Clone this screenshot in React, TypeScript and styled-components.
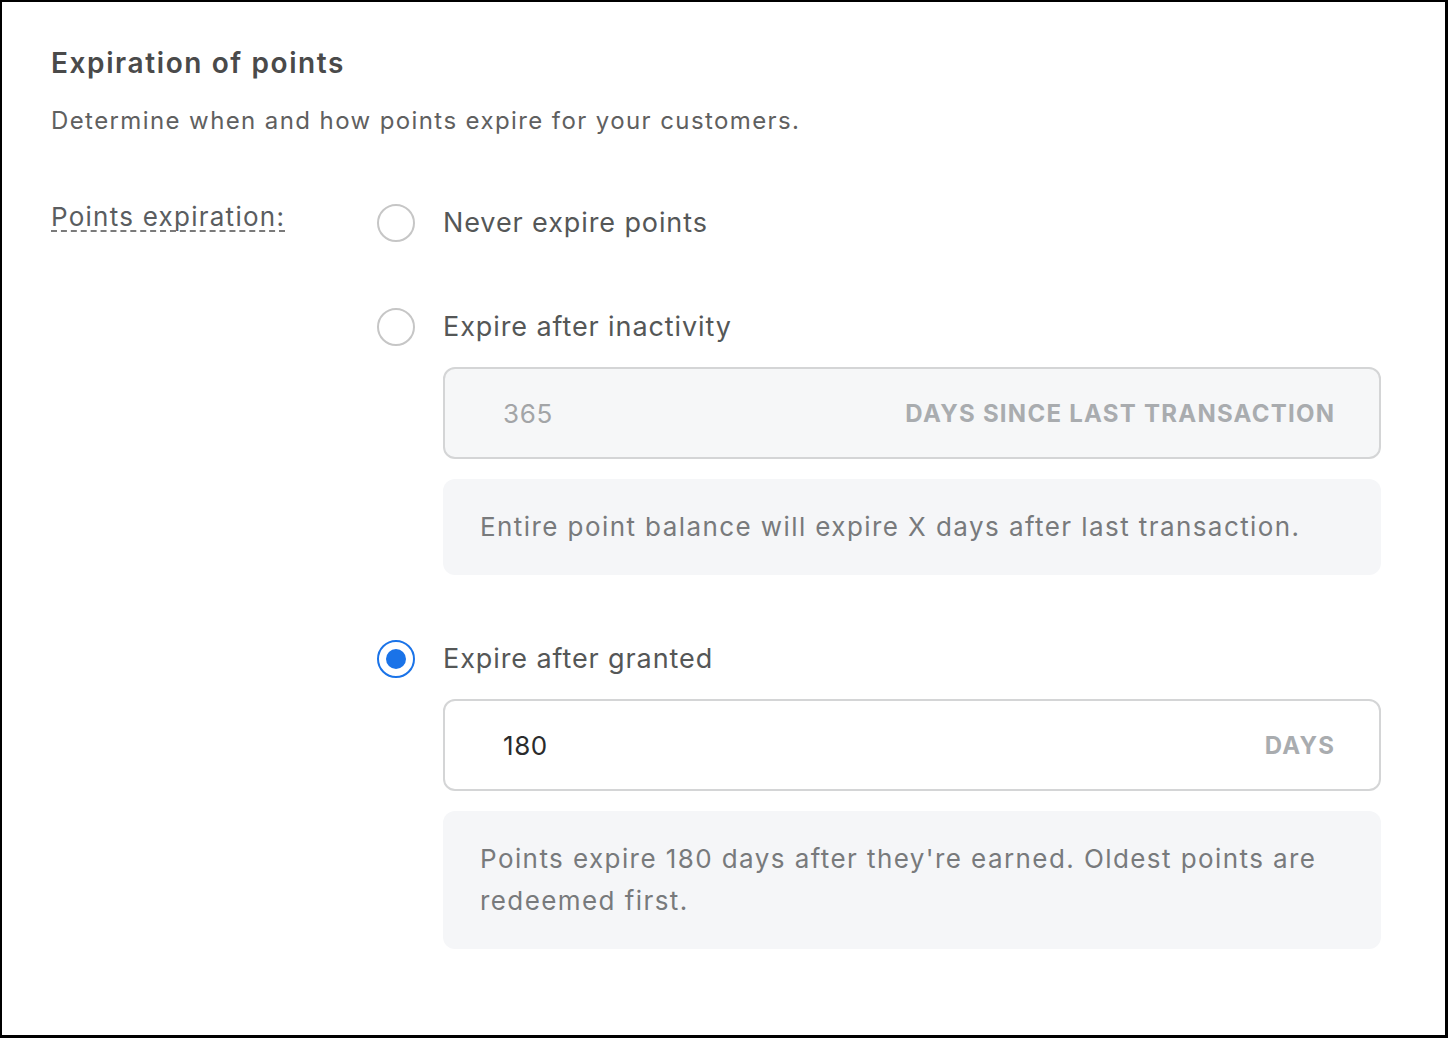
import React from 'react';
import styled, { createGlobalStyle } from 'styled-components';

const GlobalStyle = createGlobalStyle`
  html, body {
    margin: 0;
    padding: 0;
    background: #ffffff;
  }
  * {
    box-sizing: border-box;
  }
`;

const Frame = styled.div`
  width: 1448px;
  height: 1038px;
  border-style: solid;
  border-color: #000;
  border-width: 2px 3px 3px 2px;
  background: #fff;
  padding: 43px 64px 0 49px;
  font-family: Inter, 'Liberation Sans', sans-serif;
  overflow: hidden;
`;

const Title = styled.h2`
  margin: 0;
  font-size: 28px;
  line-height: 36px;
  font-weight: 600;
  color: #4a4a4a;
  letter-spacing: 1.6px;
`;

const Subtitle = styled.p`
  margin: 24px 0 0;
  font-size: 24px;
  line-height: 32px;
  color: #5f6060;
  letter-spacing: 1.4px;
`;

const SettingRow = styled.div`
  display: grid;
  grid-template-columns: 326px 1fr;
  margin-top: 66px;
`;

const FieldLabel = styled.div``;

const DottedLabel = styled.span`
  display: inline-block;
  font-size: 26px;
  line-height: 27px;
  color: #5a5d60;
  letter-spacing: 1.25px;
  border-bottom: 2px dashed #7a7a7a;
`;

const OptionList = styled.div`
  display: flex;
  flex-direction: column;
  gap: 64px;
`;

const Option = styled.div`
  display: flex;
  flex-direction: column;
  gap: 20px;
`;

const OptionHead = styled.label`
  display: flex;
  align-items: center;
  gap: 28px;
  height: 40px;
  cursor: pointer;
`;

const Radio = styled.span<{ $checked?: boolean }>`
  flex: none;
  width: 38px;
  height: 38px;
  border-radius: 50%;
  border: 2px solid ${p => (p.$checked ? '#1a73e8' : '#c6c6c6')};
  display: flex;
  align-items: center;
  justify-content: center;

  &::after {
    content: '';
    width: 20px;
    height: 20px;
    border-radius: 50%;
    background: ${p => (p.$checked ? '#1a73e8' : 'transparent')};
  }
`;

const OptionText = styled.span`
  font-size: 27px;
  line-height: 36px;
  color: #555757;
  letter-spacing: 0.9px;
`;

const OptionBody = styled.div`
  margin-left: 66px;
  display: flex;
  flex-direction: column;
  gap: 20px;
`;

const NumberField = styled.div<{ $disabled?: boolean }>`
  height: 92px;
  border: 2px solid #d4d5d6;
  border-radius: 12px;
  background: ${p => (p.$disabled ? '#f6f7f8' : '#ffffff')};
  display: flex;
  align-items: center;
  justify-content: space-between;
  padding: 0 45px 0 58px;
`;

const FieldValue = styled.span<{ $disabled?: boolean }>`
  font-size: 26px;
  letter-spacing: 0.6px;
  color: ${p => (p.$disabled ? '#a3a5a7' : '#2a2b2c')};
`;

const FieldSuffix = styled.span`
  font-size: 24px;
  font-weight: 700;
  color: #a9acaf;
  text-transform: uppercase;
  letter-spacing: 1.25px;
  margin-right: -1.25px;
`;

const InfoBox = styled.div`
  background: #f5f6f8;
  border-radius: 12px;
  padding: 27px 37px;
  font-size: 26px;
  line-height: 42px;
  color: #787a7c;
  letter-spacing: 1.42px;
`;

const options = [
  { id: 'never', label: 'Never expire points' },
  {
    id: 'inactivity',
    label: 'Expire after inactivity',
    value: '365',
    suffix: 'Days since last transaction',
    info: 'Entire point balance will expire X days after last transaction.',
  },
  {
    id: 'granted',
    label: 'Expire after granted',
    value: '180',
    suffix: 'Days',
    info: "Points expire 180 days after they're earned. Oldest points are redeemed first.",
  },
];

const App: React.FC = () => {
  const selected = 'granted';

  return (
    <>
      <GlobalStyle />
      <Frame>
        <Title>Expiration of points</Title>
        <Subtitle>Determine when and how points expire for your customers.</Subtitle>

        <SettingRow>
          <FieldLabel>
            <DottedLabel>Points expiration:</DottedLabel>
          </FieldLabel>
          <OptionList>
            {options.map(opt => {
              const checked = opt.id === selected;
              return (
                <Option key={opt.id}>
                  <OptionHead>
                    <Radio $checked={checked} />
                    <OptionText>{opt.label}</OptionText>
                  </OptionHead>
                  {opt.value && (
                    <OptionBody>
                      <NumberField $disabled={!checked}>
                        <FieldValue $disabled={!checked}>{opt.value}</FieldValue>
                        <FieldSuffix>{opt.suffix}</FieldSuffix>
                      </NumberField>
                      <InfoBox>{opt.info}</InfoBox>
                    </OptionBody>
                  )}
                </Option>
              );
            })}
          </OptionList>
        </SettingRow>
      </Frame>
    </>
  );
};

export default App;
